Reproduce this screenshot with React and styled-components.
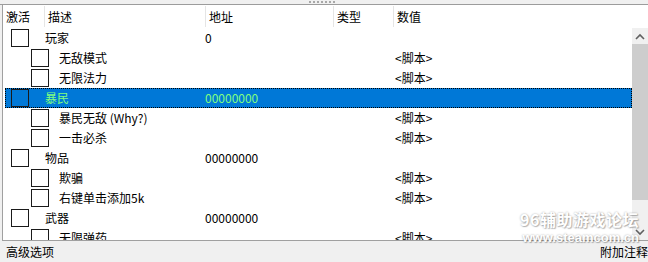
import React from 'react';
import styled, { createGlobalStyle } from 'styled-components';

const GlobalStyle = createGlobalStyle`
  html, body {
    margin: 0;
    padding: 0;
    background: #f0f0f0;
  }
  body {
    font-family: "Noto Sans CJK SC", "Microsoft YaHei", sans-serif;
    font-size: 12px;
    color: #000;
  }
`;

const Window = styled.div`
  position: relative;
  width: 648px;
  height: 262px;
  display: flex;
  flex-direction: column;
  background: #f0f0f0;
  overflow: hidden;
`;

const Splitter = styled.div`
  height: 4px;
  display: flex;
  justify-content: center;
  align-items: center;
  border-bottom: 1px solid #9c9c9c;
`;

const Grip = styled.div`
  width: 28px;
  height: 2px;
  margin-left: -2px;
  background: repeating-linear-gradient(90deg, #a8a8a8 0 2px, transparent 2px 4px);
`;

const ListFrame = styled.div`
  height: 235px;
  margin-left: 2px;
  display: flex;
  flex-direction: column;
  background: #fff;
  border-left: 1px solid #a0a0a0;
  border-bottom: 1px solid #a0a0a0;
`;

const Header = styled.div`
  height: 23px;
  display: grid;
  grid-template-columns: 41px 161px 128px 60px 1fr;
  align-items: center;
`;

const HeadCell = styled.div`
  height: 21px;
  line-height: 21px;
  padding-left: ${(p) => (p.$first ? 3 : 3)}px;
  border-left: ${(p) => (p.$first ? 'none' : '1px solid #e5e5e5')};
  white-space: nowrap;
`;

const Body = styled.div`
  flex: 1;
  display: flex;
  min-height: 0;
`;

const Rows = styled.div`
  flex: 1;
  padding-left: 2px;
  overflow: hidden;
`;

const Row = styled.div`
  height: 20px;
  display: grid;
  grid-template-columns: 200px 128px 60px 1fr;
  align-items: center;
  line-height: 20px;
  white-space: nowrap;
  box-sizing: border-box;
  background: ${(p) => (p.$selected ? '#0078d7' : 'transparent')};
  color: ${(p) => (p.$selected ? '#80ff80' : '#000')};
  outline: ${(p) => (p.$selected ? '1px dotted #000' : 'none')};
  outline-offset: -1px;
`;

const DescCell = styled.div`
  display: flex;
  align-items: center;
  padding-left: ${(p) => (p.$child ? 26 : 6)}px;
`;

const Check = styled.span`
  width: 18px;
  height: 18px;
  box-sizing: border-box;
  border: 1px solid #1a1a1a;
  background: ${(p) => (p.$selected ? '#0078d7' : '#fff')};
  flex-shrink: 0;
`;

const Label = styled.span`
  margin-left: ${(p) => (p.$child ? 10 : 16)}px;
`;

const Cell = styled.div`
  padding-left: ${(p) => p.$pad || 0}px;
`;

const ScrollBar = styled.div`
  width: 16px;
  display: flex;
  flex-direction: column;
  background: #f0f0f0;
`;

const Arrow = styled.div`
  height: 16px;
  display: flex;
  align-items: center;
  justify-content: center;
`;

const Thumb = styled.div`
  height: 156px;
  background: #cdcdcd;
`;

const Track = styled.div`
  flex: 1;
`;

const Footer = styled.div`
  flex: 1;
  display: flex;
  justify-content: space-between;
  align-items: center;
  padding: 0 0 0 6px;
`;

const Watermark = styled.div`
  position: absolute;
  right: 9px;
  bottom: 16px;
  color: #fff;
  font-weight: bold;
  text-align: right;
  text-shadow: 0 0 2px rgba(0, 0, 0, 0.35), 1px 1px 1px rgba(0, 0, 0, 0.25);
  opacity: 0.92;
  pointer-events: none;
`;

const MarkTitle = styled.div`
  font-size: 16px;
  line-height: 20px;
  letter-spacing: 0.5px;
`;

const MarkUrl = styled.div`
  font-family: "Liberation Sans", Arial, sans-serif;
  font-size: 13px;
  line-height: 16px;
  margin-top: 1px;
`;

const entries = [
  { desc: '玩家', addr: '0' },
  { desc: '无敌模式', child: true, value: '<脚本>' },
  { desc: '无限法力', child: true, value: '<脚本>' },
  { desc: '暴民', addr: '00000000', selected: true },
  { desc: '暴民无敌 (Why?)', child: true, value: '<脚本>' },
  { desc: '一击必杀', child: true, value: '<脚本>' },
  { desc: '物品', addr: '00000000' },
  { desc: '欺骗', child: true, value: '<脚本>' },
  { desc: '右键单击添加5k', child: true, value: '<脚本>' },
  { desc: '武器', addr: '00000000' },
  { desc: '无限弹药', child: true, value: '<脚本>' },
];

const Chevron = ({ up }) => (
  <svg width="10" height="7" viewBox="0 0 10 7">
    <path
      d={up ? 'M1 6 L5 2 L9 6' : 'M1 1 L5 5 L9 1'}
      fill="none"
      stroke="#606060"
      strokeWidth="1.6"
    />
  </svg>
);

const App = () => (
  <Window>
    <GlobalStyle />
    <Splitter>
      <Grip />
    </Splitter>
    <ListFrame>
      <Header>
        <HeadCell $first>激活</HeadCell>
        <HeadCell>描述</HeadCell>
        <HeadCell>地址</HeadCell>
        <HeadCell>类型</HeadCell>
        <HeadCell>数值</HeadCell>
      </Header>
      <Body>
        <Rows>
          {entries.map((e, i) => (
            <Row key={i} $selected={e.selected}>
              <DescCell $child={e.child}>
                <Check $selected={e.selected} />
                <Label $child={e.child}>{e.desc}</Label>
              </DescCell>
              <Cell>{e.addr}</Cell>
              <Cell />
              <Cell $pad={2}>{e.value}</Cell>
            </Row>
          ))}
        </Rows>
        <ScrollBar>
          <Arrow>
            <Chevron up />
          </Arrow>
          <Thumb />
          <Track />
          <Arrow>
            <Chevron />
          </Arrow>
        </ScrollBar>
      </Body>
    </ListFrame>
    <Footer>
      <span>高级选项</span>
      <span>附加注释</span>
    </Footer>
    <Watermark>
      <MarkTitle>96辅助游戏论坛</MarkTitle>
      <MarkUrl>www.steamcom.cn</MarkUrl>
    </Watermark>
  </Window>
);

export default App;
